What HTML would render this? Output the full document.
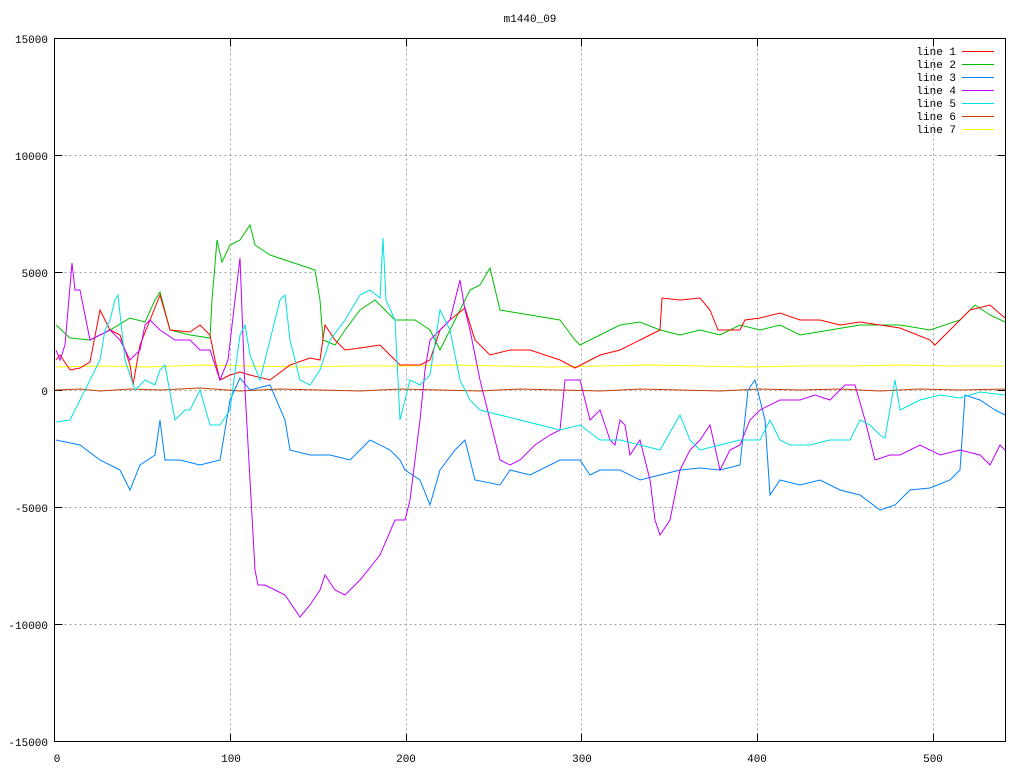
<!DOCTYPE html>
<html><head><meta charset="utf-8"><style>
html,body{margin:0;padding:0;background:#fff;}
svg{display:block;}
text{font-family:"Liberation Mono","DejaVu Sans Mono",monospace;font-size:11px;fill:#000;}
</style></head><body>
<svg width="1024" height="768" viewBox="0 0 1024 768">
<g stroke="#a0a0a0" stroke-width="1" stroke-dasharray="2,3" fill="none">
<path d="M54.5 155.5H1005.5M54.5 272.5H1005.5M54.5 390.5H1005.5M54.5 507.5H1005.5M54.5 624.5H1005.5"/>
<path d="M230.5 38.5V741.5M406.5 38.5V741.5M581.5 38.5V741.5M757.5 38.5V741.5M933.5 38.5V741.5"/>
</g>
<g stroke="#000" stroke-width="1" fill="none">
<rect x="54.5" y="38.5" width="951" height="703"/>
<path d="M54.5 155.5h8M54.5 272.5h8M54.5 390.5h8M54.5 507.5h8M54.5 624.5h8M1005.5 155.5h-8M1005.5 272.5h-8M1005.5 390.5h-8M1005.5 507.5h-8M1005.5 624.5h-8"/>
<path d="M230.5 741.5v-8M406.5 741.5v-8M581.5 741.5v-8M757.5 741.5v-8M933.5 741.5v-8M230.5 38.5v8M406.5 38.5v8M581.5 38.5v8M757.5 38.5v8M933.5 38.5v8"/>
</g>
<text x="530" y="22" text-anchor="middle">m1440_09</text>
<g text-anchor="end">
<text x="48" y="43">15000</text><text x="48" y="160">10000</text><text x="48" y="277">5000</text>
<text x="48" y="395">0</text><text x="48" y="512">-5000</text><text x="48" y="629">-10000</text><text x="48" y="746">-15000</text>
</g>
<g text-anchor="middle">
<text x="57" y="762">0</text><text x="231" y="762">100</text><text x="406" y="762">200</text>
<text x="582" y="762">300</text><text x="757" y="762">400</text><text x="933" y="762">500</text>
</g>
<g fill="none" stroke-width="1">
<polyline stroke="#ffff00" points="56,367 100,366 150,367 200,365 250,366 300,367 350,366 400,366 450,365 500,366 550,367 600,366 650,365 700,366 750,367 800,366 850,366 900,365 950,366 1005,366"/>
<polyline stroke="#c04000" points="56,390 80,389 100,391 130,389 160,390 200,388 240,391 280,389 320,390 360,391 400,389 440,390 480,391 520,389 560,390 600,391 640,389 680,390 720,391 760,389 800,390 840,389 880,391 920,389 960,390 1005,389"/>
<polyline stroke="#00c000" points="56,325 70,338 90,340 110,330 130,318 145,322 155,300 160,292 170,330 190,335 210,338 212,300 217,240 222,262 230,245 240,240 250,225 255,245 270,255 300,265 315,270 320,300 323,340 335,345 345,330 360,310 375,300 395,320 415,320 430,330 440,350 455,320 470,290 480,285 490,268 500,310 530,315 560,320 575,340 580,345 600,335 620,325 640,322 660,330 680,335 700,330 720,335 740,325 760,330 780,325 800,335 830,330 860,325 900,325 930,330 960,320 975,305 990,315 1005,322"/>
<polyline stroke="#0080ff" points="56,440 80,445 100,460 120,470 130,490 140,465 155,455 160,420 165,460 180,460 200,465 220,460 230,400 240,378 250,390 270,385 285,420 290,450 310,455 330,455 350,460 370,440 390,450 400,460 405,470 420,480 430,505 440,470 455,450 465,440 475,480 500,485 510,470 530,475 560,460 580,460 590,475 600,470 620,470 640,480 660,475 680,470 700,468 720,470 740,465 748,390 755,380 765,420 770,495 780,480 800,485 820,480 840,490 860,495 880,510 895,505 910,490 930,488 950,480 960,470 965,395 980,400 995,410 1005,415"/>
<polyline stroke="#ff0000" points="56,360 60,355 70,370 80,368 90,362 100,310 110,330 120,335 130,365 133,385 140,345 150,320 160,295 170,330 190,332 200,325 210,335 215,360 220,380 230,375 240,372 250,375 270,380 290,365 310,358 320,360 325,325 335,340 345,350 360,348 380,345 400,365 420,365 430,360 440,330 450,320 465,308 475,340 490,355 510,350 530,350 560,360 575,368 600,355 620,350 640,340 660,330 662,298 680,300 700,298 710,310 718,330 740,330 745,320 760,318 780,313 800,320 820,320 840,325 860,322 880,325 900,328 930,340 935,345 950,330 970,310 990,305 1005,318"/>
<polyline stroke="#c000ff" points="56,350 60,360 65,345 72,263 75,290 80,290 90,340 100,335 110,330 120,340 130,360 140,350 145,325 150,320 160,330 175,340 190,340 200,350 210,350 220,380 228,360 235,300 240,258 245,390 250,480 255,570 258,585 265,585 275,590 285,595 300,617 310,605 320,590 325,575 335,590 345,595 360,580 380,555 395,520 405,520 410,500 420,420 425,370 430,340 440,330 450,320 460,280 465,310 470,330 480,380 490,420 500,460 510,465 520,460 535,445 550,435 560,430 565,380 580,380 590,420 600,410 610,440 615,445 620,420 625,425 630,455 640,440 650,480 655,520 660,535 670,520 680,470 690,450 700,440 710,425 720,470 730,450 740,445 750,420 760,410 780,400 800,400 815,395 830,400 845,385 855,385 865,420 875,460 890,455 900,455 920,445 940,455 960,450 980,455 990,465 1000,445 1005,450"/>
<polyline stroke="#00e0e0" points="56,422 70,420 80,400 90,380 100,360 105,330 110,320 115,300 118,295 125,360 135,390 145,380 155,385 160,370 165,365 175,420 185,410 190,410 200,390 210,425 220,425 230,410 240,335 245,325 250,355 260,380 270,340 280,300 285,295 290,340 300,380 310,385 320,370 330,340 345,320 360,295 370,290 380,298 383,238 386,300 395,320 400,420 410,380 420,385 430,375 440,310 450,330 460,380 470,400 480,410 500,415 520,420 540,425 560,430 580,425 600,440 620,440 640,445 660,450 680,415 690,440 700,450 720,445 740,440 760,440 770,420 780,440 790,445 810,445 830,440 850,440 860,420 870,425 880,435 885,438 895,380 900,410 920,400 940,395 960,398 980,392 1005,395"/>
</g>
<g text-anchor="end">
<text x="956" y="55">line 1</text><text x="956" y="68">line 2</text><text x="956" y="81">line 3</text>
<text x="956" y="94">line 4</text><text x="956" y="107">line 5</text><text x="956" y="120">line 6</text><text x="956" y="133">line 7</text>
</g>
<g stroke-width="1">
<path d="M962 51.5h32" stroke="#ff0000"/><path d="M962 64.5h32" stroke="#00c000"/><path d="M962 77.5h32" stroke="#0080ff"/>
<path d="M962 90.5h32" stroke="#c000ff"/><path d="M962 103.5h32" stroke="#00e0e0"/><path d="M962 116.5h32" stroke="#c04000"/>
<path d="M962 129.5h32" stroke="#ffff00"/>
</g>
</svg>
</body></html>
